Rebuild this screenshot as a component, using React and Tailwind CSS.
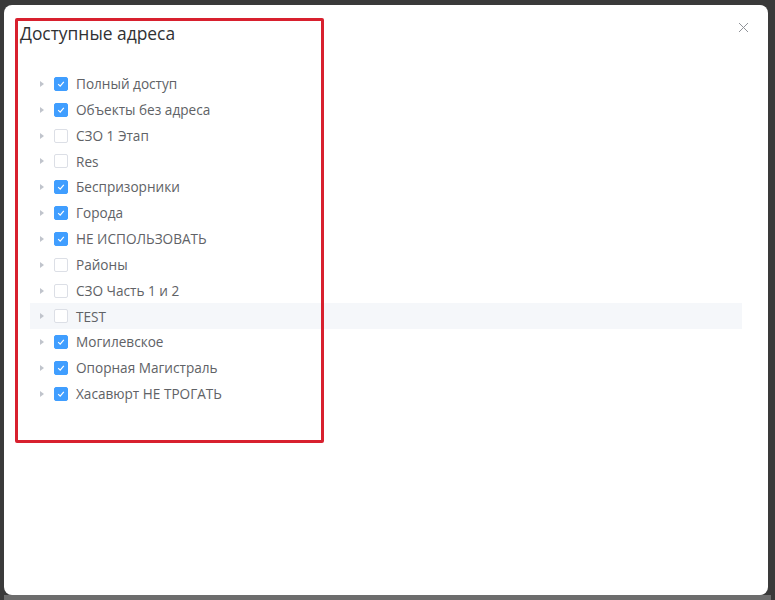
import React from "react";

const items = [
  ["Полный доступ", true],
  ["Объекты без адреса", true],
  ["СЗО 1 Этап", false],
  ["Res", false],
  ["Беспризорники", true],
  ["Города", true],
  ["НЕ ИСПОЛЬЗОВАТЬ", true],
  ["Районы", false],
  ["СЗО Часть 1 и 2", false],
  ["TEST", false, true],
  ["Могилевское", true],
  ["Опорная Магистраль", true],
  ["Хасавюрт НЕ ТРОГАТЬ", true],
];

function Row({ label, checked, hover }) {
  return (
    <div className={`flex items-center h-[25.83px] ${hover ? "bg-[#f5f7fa]" : ""}`}>
      <span className="w-[24px] flex justify-center">
        <svg width="6" height="8" viewBox="0 0 6 8">
          <path d="M1 1 L5 4 L1 7 Z" fill="#c0c4cc" />
        </svg>
      </span>
      <span
        className={`w-[14px] h-[14px] rounded-[2px] border flex items-center justify-center ${
          checked ? "bg-[#409eff] border-[#409eff]" : "bg-white border-[#dcdfe6]"
        }`}
      >
        {checked && (
          <svg width="10" height="10" viewBox="0 0 10 10">
            <path d="M2.2 5.2 L4.2 7.2 L7.8 2.8" fill="none" stroke="#fff" strokeWidth="1.2" />
          </svg>
        )}
      </span>
      <span className="ml-[8px] text-[13.6px] text-[#606266] leading-none">{label}</span>
    </div>
  );
}

export default function App() {
  return (
    <div
      className="w-[775px] h-[600px] bg-[#3a3a3a] flex flex-col overflow-hidden"
      style={{ fontFamily: '"Open Sans", "Noto Sans", sans-serif' }}
    >
      <div className="flex h-[595px] pt-[5px]">
        <div className="ml-[4px] w-[764px] h-[590px] bg-white rounded-[8px] relative">
          <div className="pl-[16px] pt-[16px] text-[17.4px] leading-[24px] text-[#303133]">
            Доступные адреса
          </div>
          <button className="absolute right-[19px] top-[16px] w-[12px] h-[12px] flex items-center justify-center">
            <svg width="11" height="11" viewBox="0 0 11 11">
              <path d="M1 1 L10 10 M10 1 L1 10" stroke="#909399" strokeWidth="1" />
            </svg>
          </button>
          <div className="mt-[26px] ml-[26px] mr-[26px] flex flex-col">
            {items.map(([l, c, h]) => (
              <Row key={l} label={l} checked={c} hover={h} />
            ))}
          </div>
          <div className="absolute left-[11px] top-[13px] w-[309px] h-[425px] border-[3px] border-[#d8202e] rounded-[2px] pointer-events-none" />
        </div>
      </div>
      <div className="h-[5px] mx-[4px] bg-[#6d6d6d]" />
    </div>
  );
}
